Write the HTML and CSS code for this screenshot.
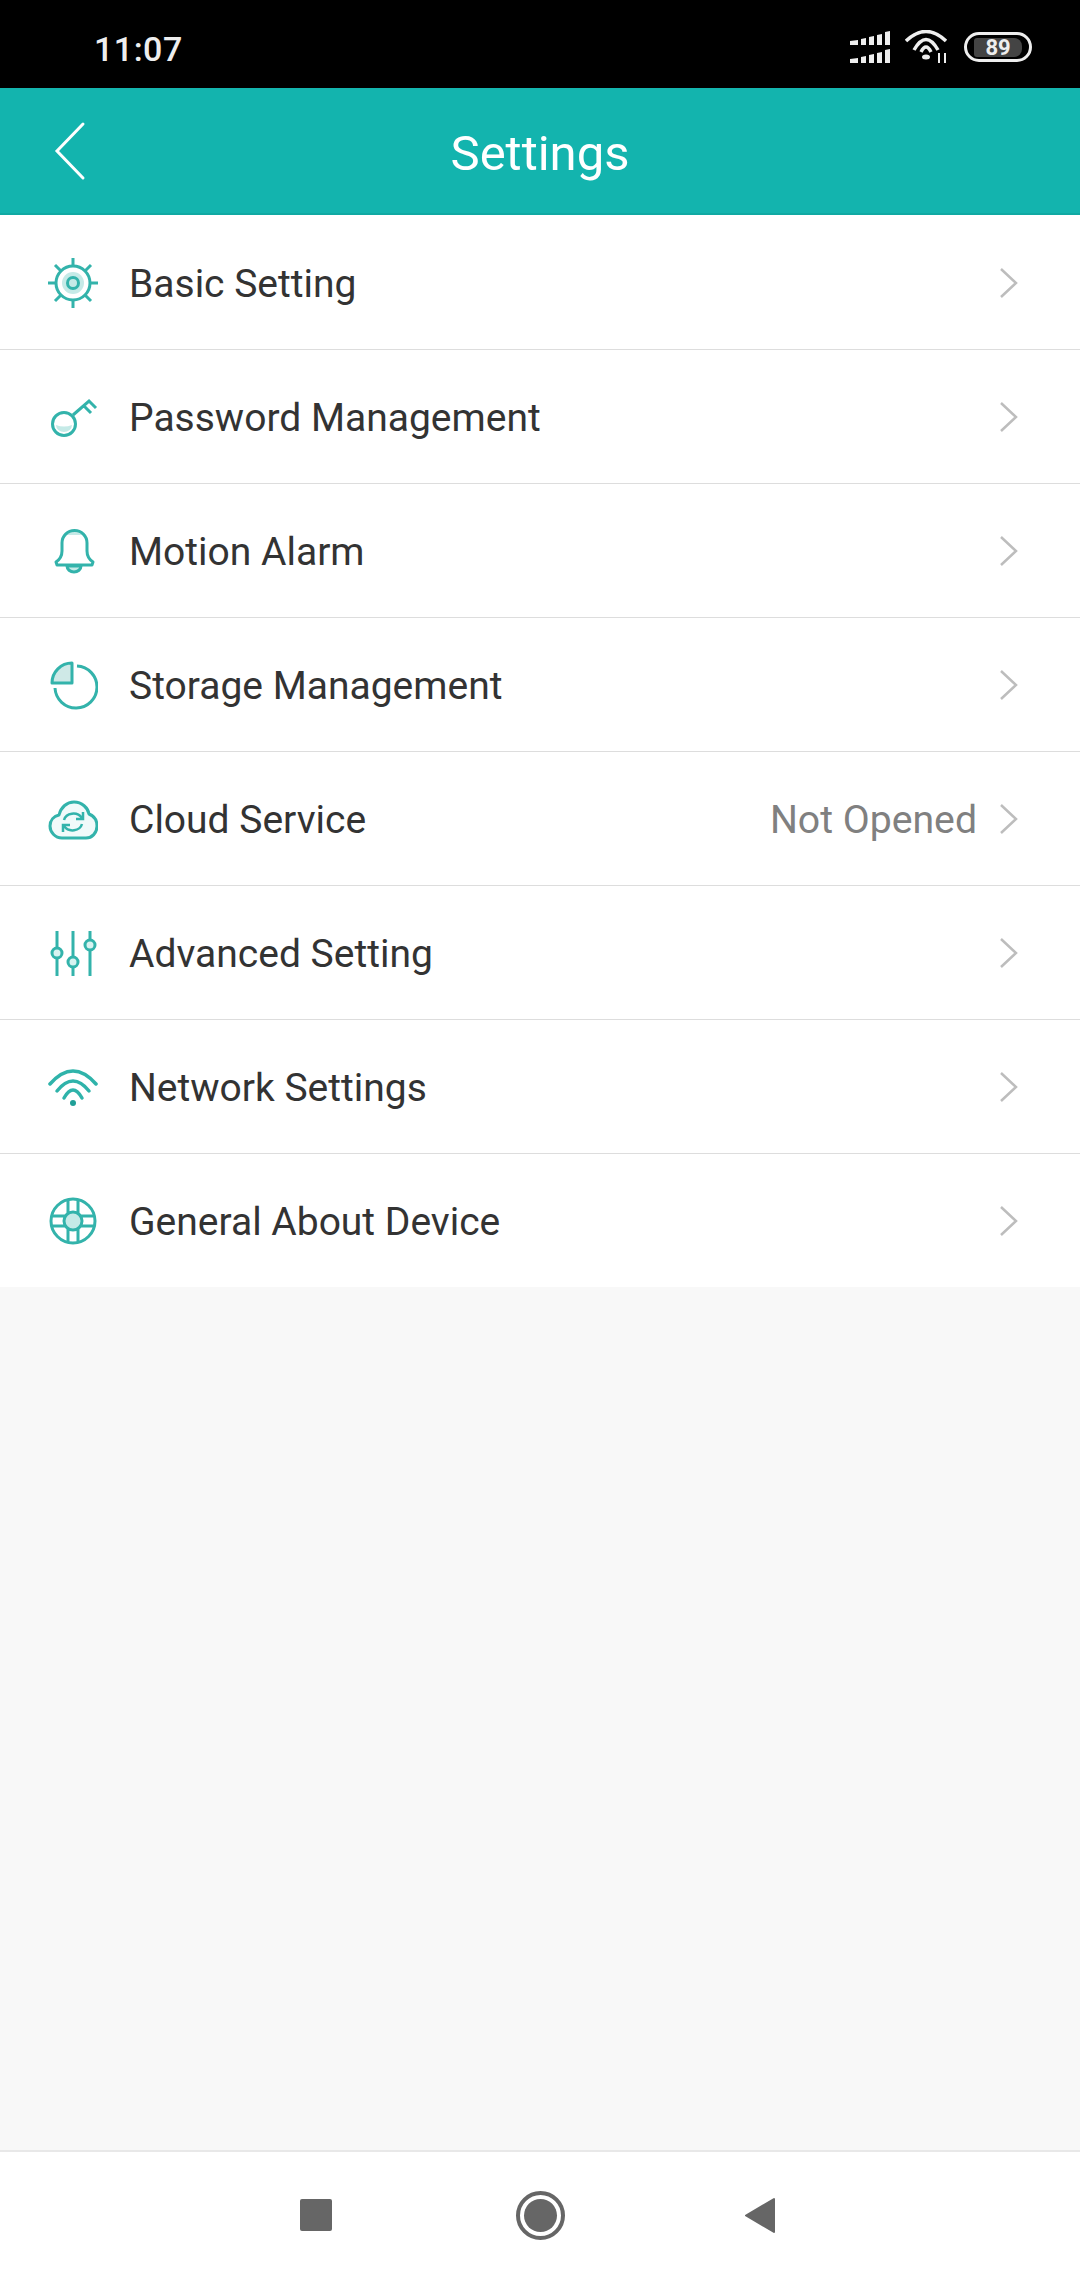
FILE: index.html
```html
<!DOCTYPE html>
<html lang="en">
<head>
  <meta charset="UTF-8" />
  <meta name="viewport" content="width=device-width, initial-scale=1.0"/>
  <title>Settings</title>
  <link rel="stylesheet" href="styles.css">
</head>
<body>
  <div class="screen">

    <!-- STATUS BAR -->
    <div class="status-bar">
      <span class="clock">11:07</span>
      <div class="status-icons">
        <svg class="signal" width="40" height="32" viewBox="0 0 40 32" fill="#eee">
          <path d="M0 10l8-1v5H0zM11 8l5-1v7h-5zM19 6l5-1v9h-5zM27 4l5-1v11h-5zM35 1l5-1v14h-5z"/>
          <path d="M0 28l8-1v5H0zM11 26l5-1v7h-5zM19 24l5-1v9h-5zM27 22l5-1v11h-5zM35 19l5-1v14h-5z"/>
        </svg>
        <svg class="wifi" width="44" height="34" viewBox="0 0 44 34" fill="none" stroke="#eee" stroke-width="3.500">
          <path d="M1 11Q21-8 41 11"/>
          <path d="M9 20Q21-1 33 20"/>
          <path d="M16 22Q21 12 26 22"/>
          <ellipse cx="21" cy="27" rx="4" ry="2.500" fill="#eee" stroke="none"/>
          <path d="M34 23v10M40 23v10" stroke-width="2"/>
        </svg>
        <div class="battery"><span class="battery-level">89</span></div>
      </div>
    </div>

    <!-- HEADER -->
    <div class="header">
      <svg class="back" width="32" height="60" viewBox="0 0 32 60" fill="none" stroke="#fff" stroke-width="3" stroke-linecap="round">
        <path d="M29 3L3 30l26 27"/>
      </svg>
      <h1>Settings</h1>
    </div>

    <!-- SETTINGS LIST -->
    <div class="list">

      <div class="row">
        <svg class="icon" viewBox="0 0 50 50" fill="none" stroke="#33b3ab" stroke-width="3">
          <circle cx="25" cy="25" r="17"/>
          <circle cx="25" cy="25" r="11" fill="#c5eae7" stroke="none"/>
          <circle cx="25" cy="25" r="5.500"/>
          <path d="M25 0v8M25 42v8M0 25h8M42 25h8M7 7l6 6M37 37l6 6M43 7l-6 6M13 37l-6 6"/>
        </svg>
        <span class="label">Basic Setting</span>
        <svg class="chevron" viewBox="0 0 20 32" fill="none" stroke="#bdbdbd" stroke-width="2.500"><path d="M2 2l15 14L2 30"/></svg>
      </div>

      <div class="row">
        <svg class="icon" viewBox="0 0 50 50" fill="none" stroke="#33b3ab" stroke-width="3">
          <path d="M8 33a8 7 0 0 0 16 0q-8 3-16 0z" fill="#c5eae7" stroke="none"/>
          <circle cx="16" cy="32" r="11.500"/>
          <path d="M25 23L41 9l7 7M36 14l7 7"/>
        </svg>
        <span class="label">Password Management</span>
        <svg class="chevron" viewBox="0 0 20 32" fill="none" stroke="#bdbdbd" stroke-width="2.500"><path d="M2 2l15 14L2 30"/></svg>
      </div>

      <div class="row">
        <svg class="icon" viewBox="0 0 50 50" fill="none" stroke="#33b3ab" stroke-width="3">
          <path d="M18 9a12 12 0 0 1 16 0z" fill="#c5eae7" stroke="none"/>
          <path d="M8 36c3-2 6-5 6-11v-8a12.500 12.500 0 0 1 25 0v8c0 6 3 9 6 11l-1 3H9z" stroke-linejoin="round"/>
          <path d="M19 40a7 6 0 0 0 14 0z" fill="#c5eae7"/>
        </svg>
        <span class="label">Motion Alarm</span>
        <svg class="chevron" viewBox="0 0 20 32" fill="none" stroke="#bdbdbd" stroke-width="2.500"><path d="M2 2l15 14L2 30"/></svg>
      </div>

      <div class="row">
        <svg class="icon" viewBox="0 0 50 50" fill="none" stroke="#33b3ab" stroke-width="3">
          <path d="M24 3v20H4C4 12 13 3 24 3z" fill="#cfe9e7" stroke-linejoin="round"/>
          <path d="M29 6A21 21 0 1 1 7 28"/>
        </svg>
        <span class="label">Storage Management</span>
        <svg class="chevron" viewBox="0 0 20 32" fill="none" stroke="#bdbdbd" stroke-width="2.500"><path d="M2 2l15 14L2 30"/></svg>
      </div>

      <div class="row">
        <svg class="icon" viewBox="0 0 50 50" fill="none" stroke="#33b3ab" stroke-width="3">
          <path d="M14 44C7 44 2 38 2 32c0-6 4-10 9-11C13 13 19 8 26 8c8 0 14 6 15 12 5 2 8 6 8 12 0 7-5 12-11 12z" fill="#f1fafa" stroke-linejoin="round"/>
          <path d="M16 26c2-7 13-9 18-2M34 30c-2 7-13 9-18 2" stroke-width="2.500"/>
          <path d="M35 18v7h-7M15 38v-7h7" stroke-width="2.500"/>
        </svg>
        <span class="label">Cloud Service</span>
        <span class="value">Not Opened</span>
        <svg class="chevron" viewBox="0 0 20 32" fill="none" stroke="#bdbdbd" stroke-width="2.500"><path d="M2 2l15 14L2 30"/></svg>
      </div>

      <div class="row">
        <svg class="icon" viewBox="0 0 50 50" fill="none" stroke="#33b3ab" stroke-width="3">
          <path d="M9 3v17M9 30v18M25 3v26M25 39v9M42 3v9M42 22v26"/>
          <circle cx="9" cy="25" r="5" fill="#d8f3f1"/>
          <circle cx="25" cy="34" r="5" fill="#d8f3f1"/>
          <circle cx="42" cy="17" r="5" fill="#d8f3f1"/>
        </svg>
        <span class="label">Advanced Setting</span>
        <svg class="chevron" viewBox="0 0 20 32" fill="none" stroke="#bdbdbd" stroke-width="2.500"><path d="M2 2l15 14L2 30"/></svg>
      </div>

      <div class="row">
        <svg class="icon" viewBox="0 0 50 50" fill="none" stroke="#2fb3aa" stroke-width="3.500" stroke-linecap="round">
          <path d="M2 22Q25-4 48 22"/>
          <path d="M9 29Q25 9 41 29"/>
          <path d="M16 36Q25 20 34 36"/>
          <circle cx="25" cy="41" r="3" fill="#1f9f97" stroke="none"/>
        </svg>
        <span class="label">Network Settings</span>
        <svg class="chevron" viewBox="0 0 20 32" fill="none" stroke="#bdbdbd" stroke-width="2.500"><path d="M2 2l15 14L2 30"/></svg>
      </div>

      <div class="row">
        <svg class="icon" viewBox="0 0 50 50" fill="none" stroke="#33b3ab" stroke-width="3">
          <circle cx="25" cy="25" r="22"/>
          <circle cx="25" cy="25" r="9" fill="#c5eae7"/>
          <path d="M20 4v14M30 4v14M20 32v14M30 32v14M4 20h14M4 30h14M32 20h14M32 30h14"/>
        </svg>
        <span class="label">General About Device</span>
        <svg class="chevron" viewBox="0 0 20 32" fill="none" stroke="#bdbdbd" stroke-width="2.500"><path d="M2 2l15 14L2 30"/></svg>
      </div>

    </div>

    <div class="empty"></div>

    <!-- NAV BAR -->
    <div class="nav-bar">
      <div class="nav-square"></div>
      <div class="nav-circle"><div class="nav-dot"></div></div>
      <svg class="nav-back" width="32" height="37" viewBox="0 0 32 37" fill="#666" stroke="#666" stroke-width="2" stroke-linejoin="round">
        <path d="M2 18.500L30 2v33z"/>
      </svg>
    </div>

  </div>
</body>
</html>
```
FILE: styles.css
```css
body {
  margin: 0;
  font-family: 'Roboto', sans-serif;
  color: #333;
}

.screen {
  display: flex;
  flex-direction: column;
  width: 1080px;
  height: 2280px;
  background: #f8f8f8;
  overflow: hidden;
}

/* Status bar */
.status-bar {
  display: flex;
  justify-content: space-between;
  align-items: center;
  height: 88px;
  padding: 6px 48px 0 94px;
  box-sizing: border-box;
  background: #000;
  flex-shrink: 0;
}

.clock {
  padding-top: 3px;
  color: #eee;
  font-size: 34px;
  font-weight: 500;
  letter-spacing: 0.5px;
}

.status-icons {
  display: flex;
  align-items: center;
  gap: 15px;
}

.battery {
  display: flex;
  align-items: center;
  justify-content: center;
  width: 68px;
  height: 30px;
  box-sizing: border-box;
  border: 3px solid #eee;
  border-radius: 15px;
}

.battery-level {
  width: 48px;
  height: 19px;
  background: #444;
  border-radius: 3px 8px 8px 3px;
  color: #eee;
  font-size: 22px;
  font-weight: 700;
  line-height: 19px;
  text-align: center;
}

/* Header */
.header {
  position: relative;
  display: flex;
  align-items: center;
  justify-content: center;
  height: 127px;
  box-sizing: border-box;
  padding-top: 6px;
  background: #13b4ae;
  border-bottom: 2px solid #10a9a3;
  flex-shrink: 0;
}

.back {
  position: absolute;
  left: 54px;
  top: 33px;
}

.header h1 {
  margin: 0;
  color: #fff;
  font-size: 49px;
  font-weight: 400;
}

/* List */
.list {
  padding-top: 1px;
  background: #fff;
  flex-shrink: 0;
}

.row {
  display: flex;
  align-items: center;
  height: 134px;
  box-sizing: border-box;
  padding: 0 61px 0 48px;
  border-bottom: 1px solid #ddd;
}

.row:last-child {
  height: 133px;
  border-bottom: none;
}

.icon {
  width: 50px;
  height: 50px;
  margin-right: 31px;
  flex-shrink: 0;
}

.label {
  flex: 1;
  padding-top: 2px;
  font-size: 39px;
}

.value {
  margin-right: 22px;
  padding-top: 2px;
  color: #808080;
  font-size: 39.200px;
}

.chevron {
  width: 20px;
  height: 32px;
  flex-shrink: 0;
}

.empty {
  flex: 1;
}

/* Nav bar */
.nav-bar {
  display: flex;
  align-items: center;
  height: 130px;
  box-sizing: border-box;
  padding: 0 0 2px 300px;
  background: #fff;
  border-top: 2px solid #e8e8e8;
  flex-shrink: 0;
}

.nav-square {
  width: 32px;
  height: 32px;
  background: #666;
  border-radius: 2px;
}

.nav-circle {
  display: flex;
  align-items: center;
  justify-content: center;
  width: 49px;
  height: 49px;
  box-sizing: border-box;
  margin-left: 184px;
  border: 4px solid #666;
  border-radius: 50%;
}

.nav-dot {
  width: 33px;
  height: 33px;
  background: #666;
  border-radius: 50%;
}

.nav-back {
  margin-left: 179px;
}
```
